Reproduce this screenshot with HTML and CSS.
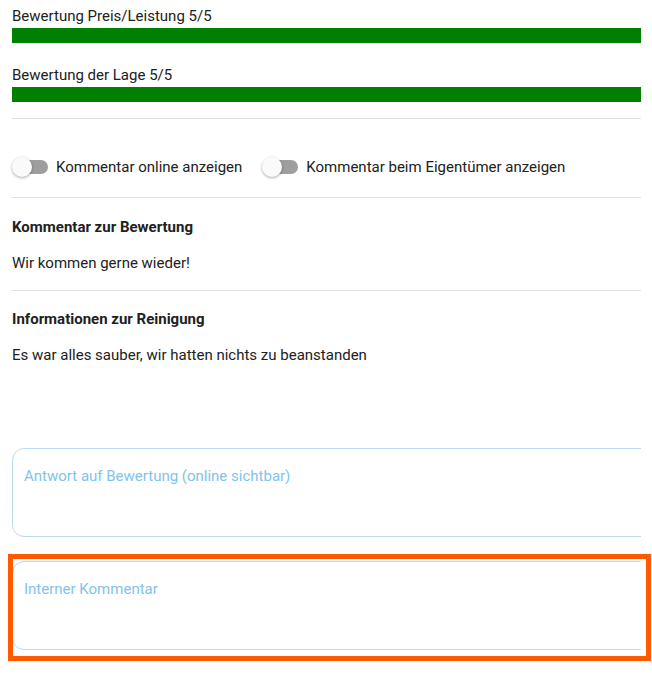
FILE: index.html
```html
<!DOCTYPE html>
<html lang="de">
<head>
<meta charset="utf-8">
<title>Bewertung</title>
<link rel="stylesheet" href="styles.css">
</head>
<body>
<div class="page">
  <div class="rating">
    <div class="rating-label">Bewertung Preis/Leistung 5/5</div>
    <div class="bar"><div class="bar-fill" style="width:100%"></div></div>
  </div>
  <div class="rating second">
    <div class="rating-label">Bewertung der Lage 5/5</div>
    <div class="bar"><div class="bar-fill" style="width:100%"></div></div>
  </div>
  <div class="divider"></div>
  <div class="toggles">
    <label class="toggle">
      <span class="switch"><span class="track"></span><span class="thumb"></span></span>
      <span class="toggle-text">Kommentar online anzeigen</span>
    </label>
    <label class="toggle">
      <span class="switch"><span class="track"></span><span class="thumb"></span></span>
      <span class="toggle-text">Kommentar beim Eigentümer anzeigen</span>
    </label>
  </div>
  <div class="divider"></div>
  <div class="block">
    <div class="block-title">Kommentar zur Bewertung</div>
    <div class="block-text">Wir kommen gerne wieder!</div>
  </div>
  <div class="divider"></div>
  <div class="block">
    <div class="block-title">Informationen zur Reinigung</div>
    <div class="block-text">Es war alles sauber, wir hatten nichts zu beanstanden</div>
  </div>
  <div class="fields">
    <div class="field"><textarea class="input" placeholder="Antwort auf Bewertung (online sichtbar)"></textarea></div>
    <div class="field internal"><textarea class="input" placeholder="Interner Kommentar"></textarea></div>
  </div>
</div>
<div class="highlight"></div>
</body>
</html>
```
FILE: styles.css
```css
html, body {
  margin: 0;
  padding: 0;
  background: #ffffff;
}
body {
  font-family: Roboto, "Liberation Sans", Arial, sans-serif;
  font-size: 15px;
  line-height: 20px;
  color: #212121;
  position: relative;
  width: 652px;
  height: 676px;
  overflow: hidden;
}
.page {
  padding: 6px 11px 0 12px;
}
.rating-label {
  height: 20px;
}
.rating.second {
  margin-top: 22px;
}
.bar {
  margin-top: 2px;
  height: 15px;
  background: #e6e6e6;
}
.bar-fill {
  height: 100%;
  background: #008000;
}
.divider {
  height: 1px;
  background: #e0e0e0;
}
.rating.second + .divider {
  margin-top: 16px;
}
.toggles {
  display: flex;
  gap: 20px;
  padding: 38px 0 20px;
}
.toggle {
  display: flex;
  align-items: center;
  gap: 8px;
}
.switch {
  position: relative;
  width: 36px;
  height: 20px;
  flex: none;
}
.track {
  position: absolute;
  left: 2px;
  top: 3px;
  width: 34px;
  height: 14px;
  border-radius: 7px;
  background: #9e9e9e;
}
.thumb {
  position: absolute;
  left: 0;
  top: 0;
  width: 20px;
  height: 20px;
  border-radius: 50%;
  background: #fafafa;
  box-shadow: 0 1px 3px rgba(0, 0, 0, 0.35);
}
.block {
  padding: 19px 0 17px;
}
.block + .divider + .block {
  padding-top: 18px;
}
.block-title {
  font-weight: 700;
  font-size: 15px;
}
.block-text {
  margin-top: 16px;
}
.fields {
  margin-top: 66px;
  width: 629px;
  overflow: hidden;
}
.field + .field {
  margin-top: 24px;
}
.input {
  display: block;
  box-sizing: border-box;
  width: 650px;
  height: 89px;
  margin: 0;
  padding: 17px 11px 16px;
  border: 1px solid #b9dcf2;
  border-radius: 12px;
  resize: none;
  font-family: Roboto, "Liberation Sans", Arial, sans-serif;
  font-size: 15px;
  line-height: 20px;
  color: #212121;
  background: #ffffff;
  outline: none;
}
.input::placeholder {
  color: #82c3ea;
  opacity: 1;
}
.highlight {
  position: absolute;
  left: 8px;
  top: 554px;
  width: 643px;
  height: 107px;
  box-sizing: border-box;
  border: 5px solid #ff5a00;
  pointer-events: none;
}
```
